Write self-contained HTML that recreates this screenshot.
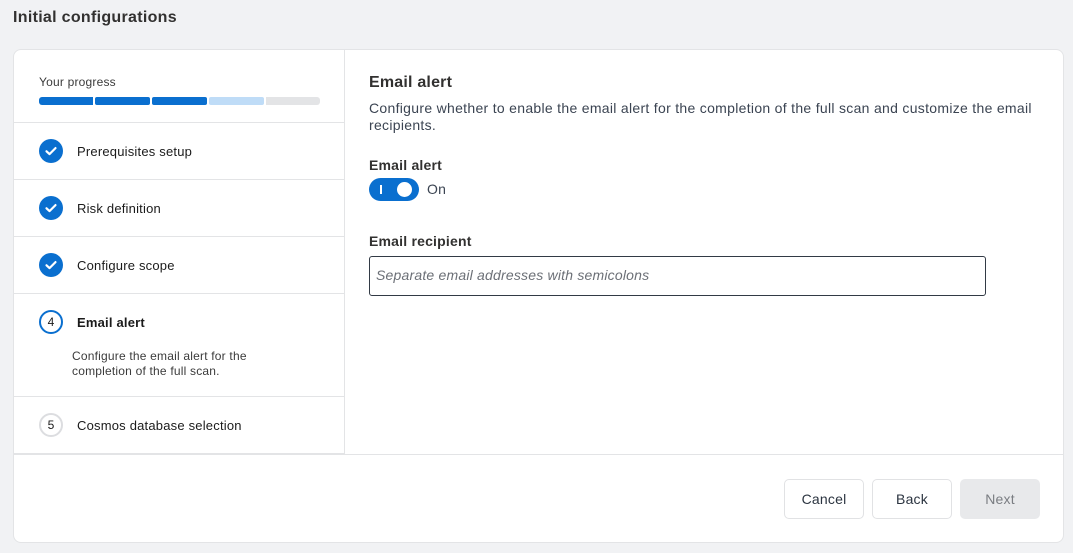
<!DOCTYPE html>
<html><head><style>
*{box-sizing:border-box;margin:0;padding:0}
body{width:1073px;height:553px;background:#f1f2f4;font-family:"Liberation Sans",sans-serif;color:#1b1b1b;position:relative;overflow:hidden;letter-spacing:0.2px}
.abs{position:absolute}
h1{position:absolute;left:13px;top:9px;font-size:16px;font-weight:bold;color:#323130;letter-spacing:0.3px}
.card{position:absolute;left:13px;top:49px;width:1051px;height:494px;background:#fff;border:1px solid #e3e4e6;border-radius:8px}
.side{position:absolute;left:0;top:0;width:331px;height:404px;border-right:1px solid #e3e4e6;border-bottom:1px solid #e3e4e6}
.row{position:absolute;left:0;width:330px;border-top:1px solid #e3e4e6}
.ic{position:absolute;left:25px;width:24px;height:24px;border-radius:50%;font-size:12px;text-align:center;line-height:20px}
.done{background:#0a6fcf}
.lbl{position:absolute;left:63px;font-size:13px;color:#1b1b1b}
.seg{position:absolute;top:47px;height:8px;border-radius:2px}
.btn{position:absolute;top:429px;width:80px;height:40px;border:1px solid #e1e2e4;border-radius:5px;font-size:14px;text-align:center;line-height:38px;color:#2b3440;background:#fff}
</style></head><body>
<h1>Initial configurations</h1>
<div class="card">
 <div class="side">
  <div class="abs" style="left:25px;top:25px;font-size:12px;color:#3b3b3b">Your progress</div>
  <div class="seg" style="left:25px;width:54px;background:#0a6fcf;border-radius:3px 0 0 3px"></div>
  <div class="seg" style="left:81px;width:55px;background:#0a6fcf"></div>
  <div class="seg" style="left:138px;width:55px;background:#0a6fcf"></div>
  <div class="seg" style="left:195px;width:55px;background:#bfdcf7"></div>
  <div class="seg" style="left:252px;width:54px;background:#e3e4e6;border-radius:0 3px 3px 0"></div>

  <div class="row" style="top:72px;height:57px">
   <div class="ic done" style="top:16px"><svg width="24" height="24" viewBox="0 0 24 24"><path d="M7.5 12.3l3 2.8 6-6" stroke="#fff" stroke-width="2.2" fill="none" stroke-linecap="round" stroke-linejoin="round"/></svg></div>
   <div class="lbl" style="top:21px">Prerequisites setup</div></div>
  <div class="row" style="top:129px;height:57px">
   <div class="ic done" style="top:16px"><svg width="24" height="24" viewBox="0 0 24 24"><path d="M7.5 12.3l3 2.8 6-6" stroke="#fff" stroke-width="2.2" fill="none" stroke-linecap="round" stroke-linejoin="round"/></svg></div>
   <div class="lbl" style="top:21px">Risk definition</div></div>
  <div class="row" style="top:186px;height:57px">
   <div class="ic done" style="top:16px"><svg width="24" height="24" viewBox="0 0 24 24"><path d="M7.5 12.3l3 2.8 6-6" stroke="#fff" stroke-width="2.2" fill="none" stroke-linecap="round" stroke-linejoin="round"/></svg></div>
   <div class="lbl" style="top:21px">Configure scope</div></div>
  <div class="row" style="top:243px;height:103px">
   <div class="ic" style="top:16px;border:2px solid #0a6fcf;color:#1b1b1b">4</div>
   <div class="lbl" style="top:21px;font-weight:bold">Email alert</div>
   <div class="abs" style="left:58px;top:55px;font-size:12px;line-height:15px;color:#3b3b3b">Configure the email alert for the<br>completion of the full scan.</div></div>
  <div class="row" style="top:346px;height:57px">
   <div class="ic" style="top:16px;border:2px solid #dcdde0">5</div>
   <div class="lbl" style="top:21px">Cosmos database selection</div></div>
 </div>
 <div class="abs" style="left:355px;top:24px;font-size:16px;font-weight:bold;color:#323130">Email alert</div>
 <div class="abs" style="left:355px;top:50px;font-size:14px;line-height:17px;color:#3b4452;letter-spacing:0.3px">Configure whether to enable the email alert for the completion of the full scan and customize the email<br>recipients.</div>
 <div class="abs" style="left:355px;top:107px;font-size:14px;font-weight:bold;color:#323130">Email alert</div>
 <div class="abs" style="left:355px;top:128px;width:50px;height:23px;border-radius:12px;background:#0a6fcf">
  <div class="abs" style="left:11px;top:7px;width:2px;height:9px;background:#fff"></div>
  <div class="abs" style="left:28px;top:4px;width:15px;height:15px;border-radius:50%;background:#fff"></div></div>
 <div class="abs" style="left:413px;top:131px;font-size:14px;color:#3b4452">On</div>
 <div class="abs" style="left:355px;top:183px;font-size:14px;font-weight:bold;color:#323130">Email recipient</div>
 <div class="abs" style="left:355px;top:206px;width:617px;height:40px;border:1px solid #323a45;border-radius:3px;padding:10px 6px;font-size:14px;font-style:italic;color:#6b6f76">Separate email addresses with semicolons</div>
 <div class="abs" style="left:0;top:404px;width:1049px;border-top:1px solid #e3e4e6"></div>
 <div class="btn" style="left:770px">Cancel</div>
 <div class="btn" style="left:858px">Back</div>
 <div class="btn" style="left:946px;background:#e8e9eb;border-color:#e8e9eb;color:#7a7d82">Next</div>
</div>
</body></html>
